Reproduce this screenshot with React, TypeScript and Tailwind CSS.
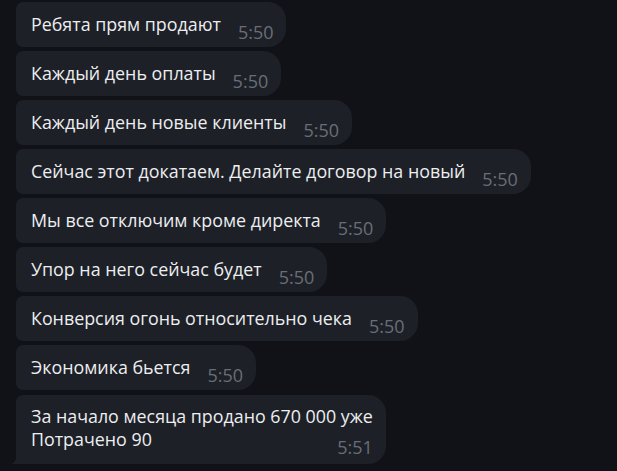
const MESSAGES = [
  { text: "Ребята прям продают", time: "5:50" },
  { text: "Каждый день оплаты", time: "5:50" },
  { text: "Каждый день новые клиенты", time: "5:50" },
  { text: "Сейчас этот докатаем. Делайте договор на новый", time: "5:50" },
  { text: "Мы все отключим кроме директа", time: "5:50" },
  { text: "Упор на него сейчас будет", time: "5:50" },
  { text: "Конверсия огонь относительно чека", time: "5:50" },
  { text: "Экономика бьется", time: "5:50" },
];

export default function App() {
  return (
    <div
      className="w-[617px] h-[471px] overflow-hidden bg-[#101217] pl-4 pt-[2px] flex flex-col items-start gap-[4px]"
      style={{ fontFamily: '"Open Sans", "Noto Sans", sans-serif' }}
    >
      {MESSAGES.map((m, i) => (
        <div
          key={i}
          className="h-[45px] flex items-start bg-[#1e2027] rounded-l-[7px] rounded-r-[18px] pl-[15px] pr-[13px] shrink-0"
        >
          <span className="text-[17.85px] leading-[22px] text-[#eceef0] pt-[11px] whitespace-nowrap">{m.text}</span>
          <span className="text-[18px] leading-[22px] text-[#686e78] ml-[17px] pt-[19px]">{m.time}</span>
        </div>
      ))}

      {/* last message with tail */}
      <div className="relative mt-[1px] shrink-0">
        <div className="bg-[#1e2027] rounded-tl-[7px] rounded-r-[18px] pl-[15px] pr-[13px] pt-[10px] pb-[5px] text-[17.85px] leading-[23px] text-[#eceef0]">
          <div className="whitespace-nowrap">За начало месяца продано 670 000 уже</div>
          <div className="flex justify-between items-start">
            <span>Потрачено 90</span>
            <span className="text-[18px] text-[#686e78] pt-[8px]">5:51</span>
          </div>
        </div>
        <svg className="absolute -left-[5px] bottom-0" width="12" height="14" viewBox="0 0 12 14">
          <path d="M5 0 L12 0 L12 14 L0 14 C3 13.5 5 11 5 7 Z" fill="#1e2027" />
        </svg>
      </div>
    </div>
  );
}
